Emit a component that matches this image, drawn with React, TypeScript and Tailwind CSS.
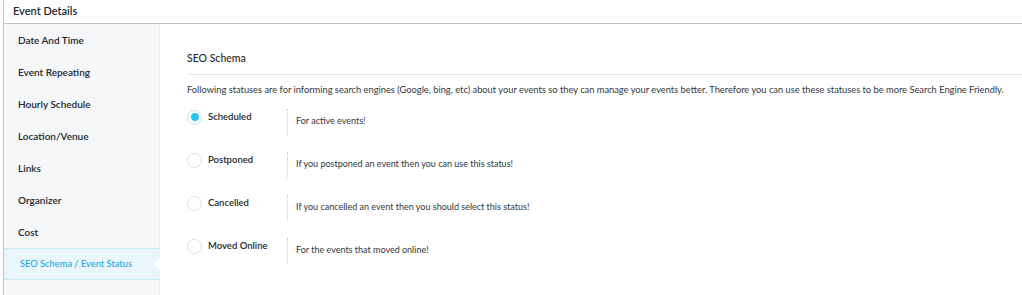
import React, { useState } from "react";

const tabs = [
  "Date And Time",
  "Event Repeating",
  "Hourly Schedule",
  "Location/Venue",
  "Links",
  "Organizer",
  "Cost",
  "SEO Schema / Event Status",
];

const statuses = [
  { label: "Scheduled", desc: "For active events!" },
  { label: "Postponed", desc: "If you postponed an event then you can use this status!" },
  { label: "Cancelled", desc: "If you cancelled an event then you should select this status!" },
  { label: "Moved Online", desc: "For the events that moved online!" },
];

export default function App() {
  const [active, setActive] = useState(7);
  const [status, setStatus] = useState(0);

  return (
    <div
      className="w-[1022px] h-[295px] bg-white overflow-hidden text-[#23282d]"
      style={{ fontFamily: 'Lato, "Open Sans", sans-serif' }}
    >
      <div className="ml-[3px] h-full border-l border-[#c3c4c7] flex flex-col">
        {/* header */}
        <div className="h-[24px] shrink-0 border-b border-[#c3c4c7] flex items-center pl-[9px] text-[11px] font-semibold">
          Event Details
        </div>

        <div className="flex flex-1">
          {/* sidebar */}
          <div className="w-[156px] shrink-0 bg-[#f5f7f9] border-r border-[#eceef0]">
            {tabs.map((t, i) => (
              <div
                key={t}
                onClick={() => setActive(i)}
                className={
                  i === active
                    ? "relative h-[32px] flex items-center pl-[16px] text-[9.3px] font-medium text-[#1fa8e0] bg-[#e9f7fd] border-y border-[#c6ebf8] cursor-pointer"
                    : "h-[32px] flex items-center pl-[14px] text-[10px] font-semibold cursor-pointer"
                }
              >
                {t}
                {i === active && (
                  <span className="absolute right-[-1px] top-1/2 -translate-y-1/2 w-0 h-0 border-y-[6px] border-y-transparent border-r-[6px] border-r-white" />
                )}
              </div>
            ))}
          </div>

          {/* content */}
          <div className="flex-1 pl-[27px] pt-[27px]">
            <div className="text-[10.5px] font-medium pb-[7px] border-b border-[#e5e7e9]">SEO Schema</div>
            <p className="mt-[8px] text-[9.3px] text-[#32373c] whitespace-nowrap">
              Following statuses are for informing search engines (Google, bing, etc) about your events so they can manage your events better. Therefore you can use these statuses to be more Search Engine Friendly.
            </p>

            <div className="mt-[12px] flex flex-col">
              {statuses.map((s, i) => (
                <div key={s.label} className="h-[43px] flex items-start" onClick={() => setStatus(i)}>
                  <div className="w-[100px] flex items-center gap-[6px] pt-[1px] cursor-pointer">
                    <span
                      className={
                        i === status
                          ? "w-[15px] h-[15px] rounded-full border border-[#b9e7f8] bg-white flex items-center justify-center"
                          : "w-[15px] h-[15px] rounded-full border border-[#dcdfe2] bg-white"
                      }
                    >
                      {i === status && <span className="w-[8px] h-[8px] rounded-full bg-[#26c2f0]" />}
                    </span>
                    <span className="text-[9.5px] font-semibold">{s.label}</span>
                  </div>
                  <div className="h-[26px] border-l border-dotted border-[#c8cbce] pl-[8px] pt-[5px] text-[9px] text-[#32373c]">
                    {s.desc}
                  </div>
                </div>
              ))}
            </div>
          </div>
        </div>
      </div>
    </div>
  );
}
